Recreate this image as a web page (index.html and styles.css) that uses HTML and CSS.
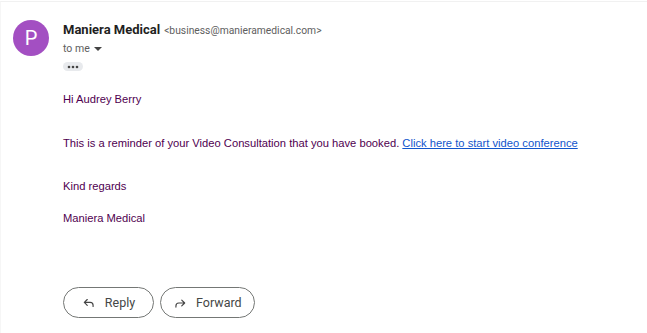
FILE: index.html
```html
<!DOCTYPE html>
<html lang="en">
<head>
    <meta charset="UTF-8">
    <title>Maniera Medical</title>
    <link rel="stylesheet" href="styles.css">
</head>
<body>
    <div class="mail">
        <div class="mail-header">
            <div class="avatar">P</div>
            <div class="meta">
                <div class="sender">
                    <span class="sender-name">Maniera Medical</span>
                    <span class="sender-email">&lt;business@manieramedical.com&gt;</span>
                </div>
                <div class="recipient">to me <span class="caret"></span></div>
                <div class="dots">
                    <svg width="12" height="4" viewBox="0 0 12 4"><circle cx="2" cy="2" r="1.3" fill="#444"/><circle cx="6" cy="2" r="1.3" fill="#444"/><circle cx="10" cy="2" r="1.3" fill="#444"/></svg>
                </div>
            </div>
        </div>

        <div class="mail-body">
            <p class="greeting">Hi Audrey Berry</p>
            <p class="message">This is a reminder of your Video Consultation that you have booked. <a href="#">Click here to start video conference</a></p>
            <p class="regards">Kind regards</p>
            <p>Maniera Medical</p>
        </div>

        <div class="actions">
            <button class="action">
                <svg width="14" height="14" viewBox="0 0 24 24"><path d="M9 6 4 11l5 5M4 11h10a5 5 0 0 1 5 5v2" fill="none" stroke="#444" stroke-width="2" stroke-linecap="round" stroke-linejoin="round"/></svg>
                Reply
            </button>
            <button class="action">
                <svg width="14" height="14" viewBox="0 0 24 24"><path d="M15 7l5 5-5 5M20 12H10a5 5 0 0 0-5 5v2" fill="none" stroke="#444" stroke-width="2" stroke-linecap="round" stroke-linejoin="round"/></svg>
                Forward
            </button>
        </div>
    </div>
</body>
</html>
```

FILE: styles.css
```css
* {
    margin: 0;
    padding: 0;
    box-sizing: border-box;
}

body {
    background: #fff;
    font-family: Roboto, "Liberation Sans", sans-serif;
    width: 647px;
    height: 333px;
    overflow: hidden;
}

.mail {
    border-top: 1px solid #f1f1f1;
    border-left: 1px solid #f6f6f6;
    height: 333px;
    margin-top: 1px;
}

.mail-header {
    display: flex;
    padding: 18px 0 0 12px;
}

.avatar {
    width: 36px;
    height: 36px;
    border-radius: 50%;
    background: #a34fc2;
    color: #fff;
    font-size: 20px;
    display: flex;
    align-items: center;
    justify-content: center;
    margin-right: 14px;
}

.sender {
    line-height: 18px;
}

.sender-name {
    font-size: 13px;
    font-weight: 700;
    color: #1f1f1f;
}

.sender-email {
    font-size: 10.3px;
    color: #5e5e5e;
}

.recipient {
    font-size: 10.5px;
    color: #5e5e5e;
    line-height: 16px;
    margin-top: 1px;
}

.caret {
    display: inline-block;
    width: 0;
    height: 0;
    border-left: 4px solid transparent;
    border-right: 4px solid transparent;
    border-top: 4px solid #444;
    margin-left: 2px;
    vertical-align: middle;
}

.dots {
    margin-top: 5px;
    width: 20px;
    height: 9px;
    border-radius: 5px;
    background: #e8eaed;
    display: flex;
    align-items: center;
    justify-content: center;
}

.mail-body {
    padding: 21px 0 0 62px;
    font-family: "Liberation Sans", Arial, sans-serif;
    font-size: 11.2px;
    color: #500050;
}

.mail-body p {
    line-height: 14px;
}

.greeting {
    margin-bottom: 30px;
}

.message {
    margin-bottom: 29px;
}

.regards {
    margin-bottom: 18px;
}

.mail-body a {
    color: #1155cc;
}

.actions {
    display: flex;
    gap: 6px;
    padding: 62px 0 0 62px;
}

.action {
    display: flex;
    align-items: center;
    justify-content: center;
    gap: 9px;
    min-width: 91px;
    height: 31px;
    padding: 0 12px;
    border: 1px solid #747775;
    border-radius: 16px;
    background: #fff;
    color: #444746;
    font-family: Roboto, "Liberation Sans", sans-serif;
    font-size: 12.5px;
    cursor: pointer;
}
```
